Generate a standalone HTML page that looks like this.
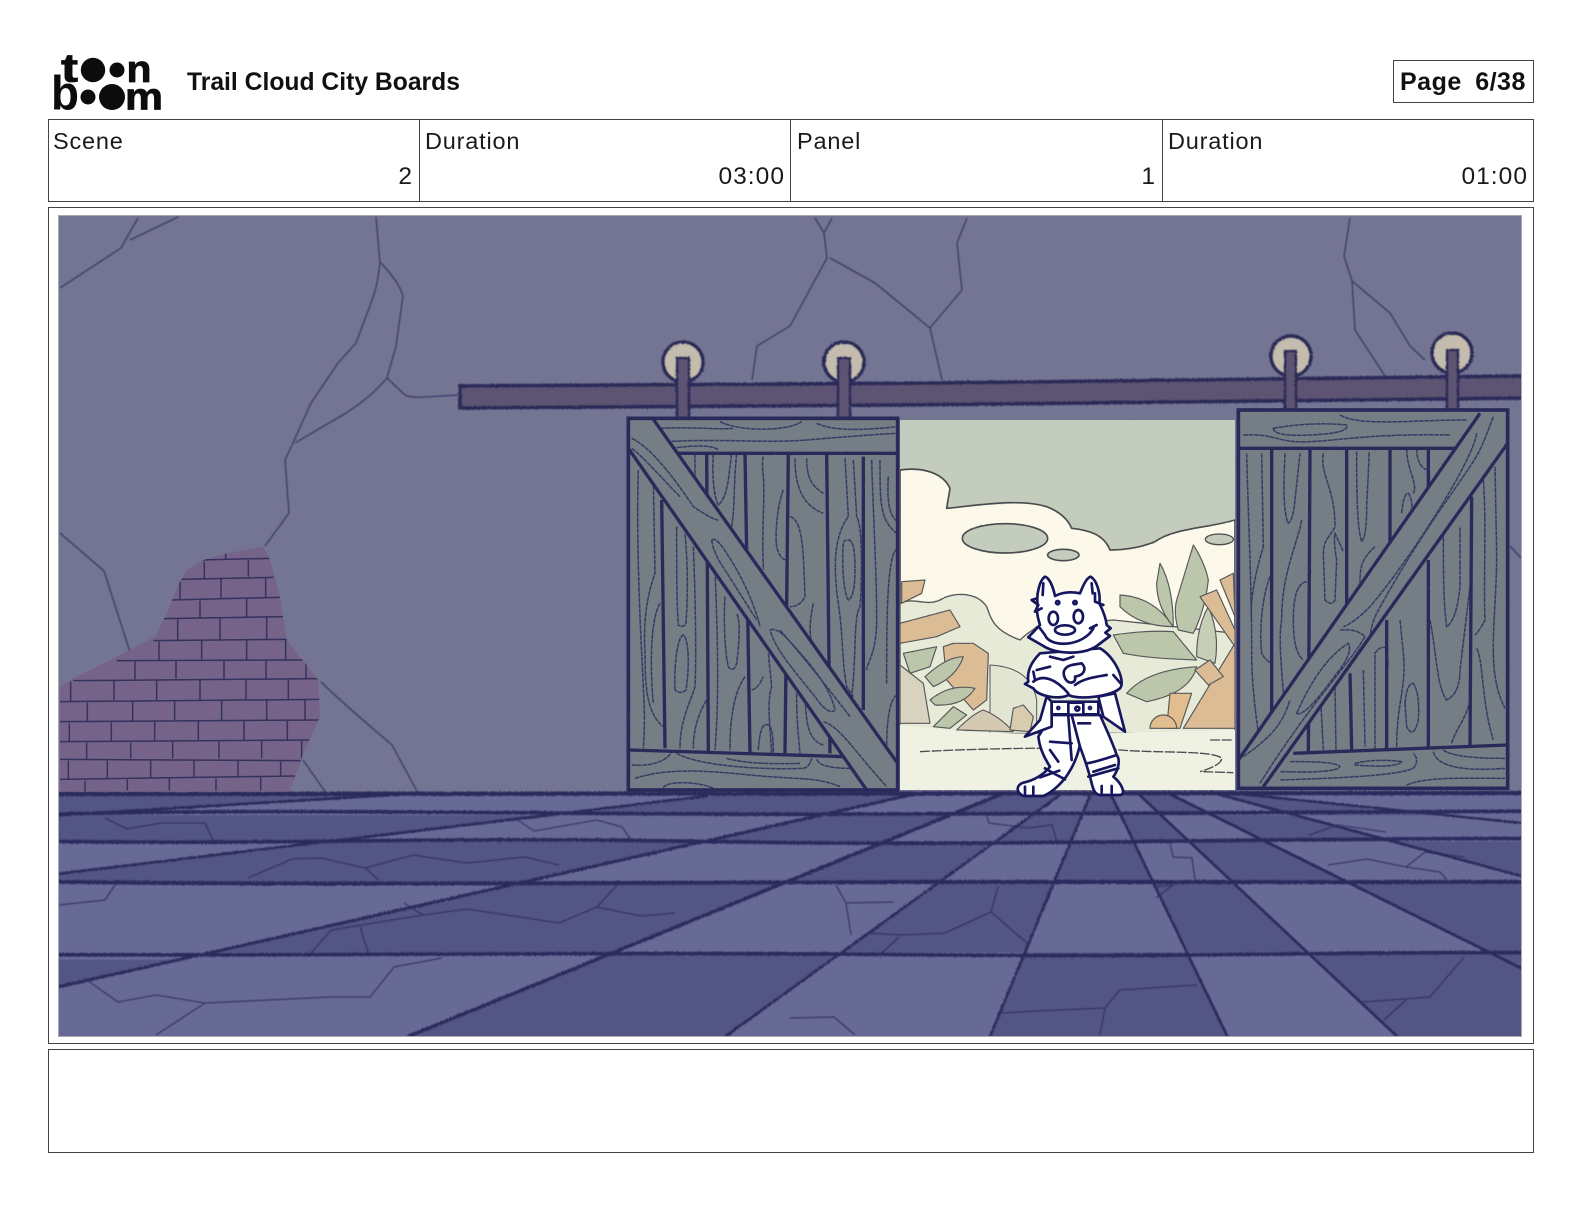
<!DOCTYPE html>
<html>
<head>
<meta charset="utf-8">
<title>Trail Cloud City Boards</title>
<style>
html,body{margin:0;padding:0;background:#fff;}
body{width:1584px;height:1224px;position:relative;overflow:hidden;font-family:"Liberation Sans",sans-serif;color:#111;}
.box{position:absolute;border:1px solid #444;box-sizing:border-box;}
.t{position:absolute;white-space:nowrap;font-size:23.5px;letter-spacing:.8px;line-height:28px;color:#1a1a1a;}
.v{font-size:24.5px;letter-spacing:1.05px;}
.r{text-align:right;}
svg{position:absolute;left:0;top:0;}
</style>
</head>
<body>
<svg width="1584" height="1224" viewBox="0 0 1584 1224" style="z-index:1">
<defs>
<clipPath id="ic"><rect x="58.5" y="215.5" width="1463" height="821"/></clipPath>
<clipPath id="bc"><path d="M670,80 L560,100 L490,120 L440,150 L415,195 L380,280 L345,350 L270,390 L100,475 L60,500 L60,815 L750,815 L790,700 L840,590 L835,480 L780,410 L740,360 L720,230 L690,120 Z"/></clipPath>
<clipPath id="oc"><rect x="60" y="60" width="1005" height="1110"/></clipPath>
<filter id="rough" x="-2%" y="-2%" width="104%" height="104%"><feTurbulence type="fractalNoise" baseFrequency=".55" numOctaves="2" seed="4"/><feDisplacementMap in="SourceGraphic" scale="2.6"/><feGaussianBlur stdDeviation=".5"/></filter>
<filter id="soft"><feGaussianBlur stdDeviation=".45"/></filter>
</defs>

<!-- logo -->
<g fill="#0c0c0c" font-family="Liberation Sans" font-weight="700">
<text x="61" y="81.5" font-size="40" textLength="17" lengthAdjust="spacingAndGlyphs" stroke="#0c0c0c" stroke-width=".8">t</text>
<circle cx="93" cy="70" r="12.2"/><circle cx="117" cy="70" r="7.5"/>
<text x="126.5" y="82" font-size="38" textLength="25" lengthAdjust="spacingAndGlyphs" stroke="#0c0c0c" stroke-width=".8">n</text>
<text x="51" y="109.5" font-size="48" textLength="28" lengthAdjust="spacingAndGlyphs">b</text>
<circle cx="88" cy="97" r="7.5"/><circle cx="112" cy="97" r="13"/>
<text x="125" y="109.5" font-size="38" textLength="38" lengthAdjust="spacingAndGlyphs" stroke="#0c0c0c" stroke-width=".8">m</text>
</g>

<g clip-path="url(#ic)">
<rect x="58" y="215" width="1464" height="585" fill="#747493"/>

<g transform="scale(1.0102)">
<!-- floor -->
<rect x="57" y="785" width="1452" height="245" fill="#686a96"/>
<g fill="#535584" filter="url(#soft)">
<path d="M57,950 L171,950 L57,977Z"/>
<path d="M607,943 L833,943 L718,1026 L404,1026Z"/>
<path d="M1014,943 L1175,943 L1215,1026 L980,1026Z"/>
<path d="M1295,943 L1475,943 L1509,960 L1509,1026 L1383,1026Z"/>
<path d="M210,943 L607,943 L779,873 L520,873Z"/>
<path d="M833,943 L1014,943 L1043,873 L930,873Z"/>
<path d="M1175,943 L1295,943 L1220,873 L1142,873Z"/>
<path d="M1334,873 L1509,873 L1509,960 L1475,943Z"/>
<path d="M57,865 L59,873 L520,873 L697,833 L334,833Z"/>
<path d="M779,873 L930,873 L985,833 L877,833Z"/>
<path d="M1043,873 L1142,873 L1122,833 L1060,833Z"/>
<path d="M1220,873 L1334,873 L1253,833 L1177,833Z"/>
<path d="M1381,833 L1509,833 L1509,868Z"/>
<path d="M57,807 L558,807 L334,833 L57,833Z"/>
<path d="M812,807 L941,807 L877,833 L697,833Z"/>
<path d="M1021,807 L1071,807 L1060,833 L985,833Z"/>
<path d="M1110,807 L1150,807 L1177,833 L1122,833Z"/>
<path d="M1200,807 L1284,807 L1381,833 L1253,833Z"/>
<path d="M57,785 L420,785 L57,807Z"/>
<path d="M730,785 L910,785 L812,807 L558,807Z"/>
<path d="M994,785 L1052,785 L1021,807 L941,807Z"/>
<path d="M1080,785 L1099,785 L1110,807 L1071,807Z"/>
<path d="M1126,785 L1156,785 L1200,807 L1150,807Z"/>
<path d="M1201,785 L1218,785 L1430,807 L1284,807Z"/>
</g>
<g filter="url(#rough)" fill="none" stroke="#2a2b5c" stroke-linecap="round">
<path stroke-width="4.2" d="M57,786 L1509,785"/>
<path stroke-width="3.6" d="M57,806 C300,800 500,806 800,806 S1200,804 1509,803"/>
<path stroke-width="3.6" d="M57,833 C300,836 420,828 700,833 S1200,830 1509,830"/>
<path stroke-width="4" d="M57,873 C300,876 600,874 900,873 S1300,874 1509,873"/>
<path stroke-width="3.6" d="M57,945 C400,946 600,942 900,945 S1300,942 1509,943"/>
<path stroke-width="3.4" d="M404,1026 L994,785"/>
<path stroke-width="2.6" d="M718,1026 L1052,785"/>
<path stroke-width="2.6" d="M980,1026 L1080,785"/>
<path stroke-width="2.6" d="M1215,1026 L1099,785"/>
<path stroke-width="2.6" d="M1383,1026 L1126,785"/>
<path stroke-width="2.8" d="M1509,960 L1156,785"/>
<path stroke-width="2.6" d="M1509,868 L1201,785"/>
<path stroke-width="2.4" d="M1509,815 L1218,785"/>
<path stroke-width="3" d="M57,977 L910,785"/>
<path stroke-width="2.6" d="M57,865 L700,788"/>
<path stroke-width="2.6" d="M57,807 L420,785"/>
</g>
</g>

<!-- wall cracks -->
<g fill="none" stroke="#2a2c5c" stroke-width="1.3" stroke-opacity=".78" filter="url(#soft)" stroke-linejoin="round">
<path d="M60,288 L121,248 L138,218M130,240 L178,217"/>
<path d="M376,217 L380,263 C378,280 376,290 371,303 L356,343 L338,363 L311,403 L293,443 L285,460 L289,513 L265,546"/>
<path d="M381,263 C392,275 400,285 403,296 L396,346 L387,378 C375,392 360,405 341,416 L295,443M387,378 L405,395 Q411,398 425,397 L458,395"/>
<path d="M60,533 L104,571 L130,652"/>
<path d="M321,682 C350,710 375,730 392,745 L418,793M303,760 L326,793"/>
<path d="M815,218 L824,233 L832,218M824,233 L827,258 L790,326 L757,346 L752,380M830,258 L875,283 L930,328 L942,380M930,328 L962,290 L957,243 L967,218"/>
<path d="M1350,218 L1344,256 L1352,281 L1355,330 L1385,376M1352,281 L1390,313 L1410,346 L1425,360M1510,546 L1521,558"/>
</g>

<!-- floor cracks -->
<g fill="none" stroke="#2f3060" stroke-width="1.3" stroke-opacity=".85" filter="url(#soft)">
<path d="M105,818 L127,829 L161,823 L205,823 L214,842"/>
<path d="M515,818 L534,831 L597,820 L622,827 L631,840"/>
<path d="M248,878 L292,859 L321,858 L365,868 L413,855 L467,863 L525,857 L559,865M365,868 L379,880"/>
<path d="M59,905 L105,900 L115,885"/>
<path d="M311,953 L331,930 L423,915 L467,909 L559,923 L597,907 L619,883M597,907 L641,916 L675,913M404,903 L423,915M360,927 L369,955"/>
<path d="M84,978 L118,1002 L156,995 L205,1003 L331,997 L370,997 L394,967 L442,958M205,1003 L156,1035"/>
<path d="M986,813 L989,823 L1028,828 L1052,825 L1057,842"/>
<path d="M1170,843 L1173,857 L1192,858 L1195,880"/>
<path d="M1309,835 L1338,825 L1386,832"/>
<path d="M1328,865 L1367,859 L1406,867 L1440,872 L1447,880M1406,867 L1425,852 L1464,857"/>
<path d="M836,885 L846,903 L894,902M846,903 L851,935"/>
<path d="M868,933 L901,935 L945,933 L991,912 L998,887M991,912 L1027,943M899,937 L882,953"/>
<path d="M1001,1013 L1057,1010 L1105,1008 L1120,990 L1197,985M1105,1008 L1100,1035"/>
<path d="M1464,957 L1430,997 L1362,1002M1406,1000 L1384,1020"/>
<path d="M790,1018 L834,1017 L855,1035"/>
<path d="M1153,887 L1173,885 L1156,898"/>
</g>

<!-- bricks -->
<g transform="translate(40,520) scale(.33333)" filter="url(#soft)">
<path d="M670,80 L560,100 L490,120 L440,150 L415,195 L380,280 L345,350 L270,390 L100,475 L60,500 L60,815 L750,815 L790,700 L840,590 L835,480 L780,410 L740,360 L720,230 L690,120 Z" fill="#74648a"/>
<g clip-path="url(#bc)" stroke="#2f2c58" stroke-width="4.5" fill="none" stroke-opacity=".9">
<path d="M480,120 L690,115M415,178 L700,172M390,240 L720,232M370,296 L735,290M340,362 L745,358M230,422 L790,420M100,482 L835,476M60,545 L845,538M60,605 L840,600M60,665 L820,660M60,718 L790,722M60,778 L765,768"/>
<path d="M493,125 V175M625,120 V170M557,100 V118M420,180 V238M543,175 V235M677,172 V232M480,242 V292M620,236 V290M413,298 V362M540,295 V360M680,292 V358M357,365 V420M485,362 V418M620,360 V420M737,358 V420M285,424 V478M408,422 V476M552,420 V478M678,422 V476M798,430 V476M92,485 V545M222,482 V540M350,482 V540M480,480 V540M618,480 V538M745,478 V538M142,548 V605M278,545 V603M404,543 V600M545,542 V600M680,540 V600M795,540 V600M88,610 V665M214,607 V663M344,605 V662M475,602 V660M612,602 V660M742,602 V660M140,668 V718M272,668 V715M398,665 V715M537,665 V715M665,663 V715M785,663 V715M85,722 V778M202,722 V775M332,722 V772M462,722 V770M594,722 V768M722,725 V768M135,782 V815M262,778 V812M388,775 V812M528,775 V812M662,772 V812"/>
</g>
</g>

<!-- rail -->
<g filter="url(#rough)">
<path d="M460,386 C800,385 1200,381 1523,376 L1523,398 C1200,403 800,406 460,408Z" fill="#5d5272" stroke="#2a2a58" stroke-width="3.6"/>
<circle cx="683" cy="362" r="20" fill="#c4bcae" stroke="#2a2a58" stroke-width="3.6"/>
<circle cx="844" cy="362" r="20" fill="#c4bcae" stroke="#2a2a58" stroke-width="3.6"/>
<circle cx="1291" cy="356" r="20" fill="#c4bcae" stroke="#2a2a58" stroke-width="3.6"/>
<circle cx="1452" cy="353" r="20" fill="#c4bcae" stroke="#2a2a58" stroke-width="3.6"/>
<g fill="#5d5272" stroke="#2a2a58" stroke-width="2.6">
<rect x="677" y="358" width="12" height="62"/>
<rect x="838" y="358" width="12" height="62"/>
<rect x="1285" y="351" width="11" height="60"/>
<rect x="1447" y="350" width="11" height="60"/>
</g>
</g>

<!-- opening -->
<g transform="translate(880,400) scale(.33333)">
<g filter="url(#rough)" clip-path="url(#oc)" stroke-linejoin="round">
<rect x="60" y="60" width="1005" height="1110" fill="#c3ccbd"/>
<path d="M60,210 C130,200 190,220 210,265 L200,325 C300,315 420,295 500,320 C540,335 565,360 575,385 C620,390 670,400 690,450 C740,450 790,440 825,425 C880,385 980,385 1065,360 V1100 H60Z" fill="#fdf9ea" stroke="#4a4e50" stroke-width="5"/>
<ellipse cx="375" cy="415" rx="128" ry="44" fill="#c3ccbd" stroke="#4a4e50" stroke-width="5"/>
<ellipse cx="550" cy="465" rx="47" ry="17" fill="#c3ccbd" stroke="#4a4e50" stroke-width="5"/>
<ellipse cx="1018" cy="418" rx="42" ry="16" fill="#c3ccbd" stroke="#4a4e50" stroke-width="4"/>
<path d="M60,610 C100,590 140,620 180,600 C220,575 290,575 320,620 C335,660 340,690 420,720 C440,700 460,690 470,680 L700,660 L1065,700 V1000 H60Z" fill="#e8ead8" stroke="#55595a" stroke-width="4"/>
<path d="M330,795 C420,800 460,840 470,900 L470,1000 H330Z" fill="#e2e5d2" stroke="#55595a" stroke-width="3"/>
<path d="M60,795 L130,850 L150,970 L60,970Z" fill="#d9d2bf" stroke="#55595a" stroke-width="3.5"/>
<path d="M65,545 L135,540 L125,580 L65,610Z" fill="#dcbc94" stroke="#55595a" stroke-width="3.5"/>
<path d="M60,670 L210,630 L240,680 L170,710 L60,730Z" fill="#dcbc94" stroke="#55595a" stroke-width="3.5"/>
<path d="M70,760 L170,740 L150,800 L90,820Z" fill="#bcc6aa" stroke="#55595a" stroke-width="3.5"/>
<path d="M190,740 L220,730 L280,730 L325,760 L320,900 L280,930 L200,840Z" fill="#dcbc94" stroke="#55595a" stroke-width="3.5"/>
<path d="M135,830 Q200,770 250,770 Q230,830 160,860Z M150,900 Q210,850 285,865 Q250,920 165,915Z M160,980 L220,920 L260,945 L210,985Z" fill="#bcc6aa" stroke="#55595a" stroke-width="3.5"/>
<path d="M230,990 Q280,940 310,930 Q360,950 400,995Z" fill="#d4cab4" stroke="#55595a" stroke-width="3.5"/>
<path d="M390,990 L400,925 L430,915 L460,950 L450,995Z" fill="#d9ccae" stroke="#55595a" stroke-width="3.5"/>
<path d="M720,585 Q820,590 880,680 Q780,680 720,620Z" fill="#bcc6aa" stroke="#55595a" stroke-width="3.5"/>
<path d="M840,490 Q880,560 880,680 Q830,620 830,550Z" fill="#bcc6aa" stroke="#55595a" stroke-width="3.5"/>
<path d="M940,435 Q975,490 985,540 Q975,630 940,700 L895,690 Q880,640 890,600Z" fill="#bcc6aa" stroke="#55595a" stroke-width="3.5"/>
<path d="M985,620 Q1020,700 1005,790 L950,770 Q950,680 985,620Z" fill="#c6cfb5" stroke="#55595a" stroke-width="3.5"/>
<path d="M700,705 Q800,690 880,695 L950,780 Q800,775 730,760Z" fill="#bcc6aa" stroke="#55595a" stroke-width="3.5"/>
<path d="M740,880 Q800,810 950,800 Q930,880 800,905Z" fill="#bcc6aa" stroke="#55595a" stroke-width="3.5"/>
<path d="M910,985 L1065,730 V985Z" fill="#dcbc94" stroke="#55595a" stroke-width="3.5"/>
<path d="M960,590 L1010,570 L1065,690 V740Z M1020,540 L1060,520 L1065,650Z" fill="#dcbc94" stroke="#55595a" stroke-width="3.5"/>
<path d="M945,810 L990,780 L1030,830 L985,855Z" fill="#dcbc94" stroke="#55595a" stroke-width="3.5"/>
<path d="M870,880 L935,880 L900,985 L860,985Z" fill="#e2bd8e" stroke="#55595a" stroke-width="3.5"/>
<path d="M810,985 A40,40 0 0 1 890,985Z" fill="#e2bd8e" stroke="#55595a" stroke-width="3.5"/>
<path d="M60,975 C150,985 250,995 400,1000 S900,995 1065,990 V1170 H60Z" fill="#eff1e2"/>
<path d="M120,1055 C300,1045 600,1040 720,1050 S1000,1050 1025,1075 Q1025,1095 960,1115M990,1020 L1060,1020M970,1115 L1060,1118" fill="none" stroke="#4a4e50" stroke-width="4" stroke-dasharray="30 5"/>
</g>
</g>

<!-- left door -->
<g transform="translate(600,320) scale(.33333)" filter="url(#rough)">
<rect x="85" y="295" width="808" height="1115" fill="#757d85"/>
<g fill="none" stroke="#2c2e5c" stroke-width="4.5" stroke-dasharray="14 2" stroke-opacity=".85">
<path d="M180,325 C300,320 350,330 400,325M360,305 C420,335 560,335 605,305M650,310 C700,335 800,330 890,320M200,365 C350,355 500,370 620,360 S800,345 890,340M215,385 C280,375 340,375 355,390"/>
<path d="M95,1335 C150,1340 200,1325 215,1295M105,1375 C200,1345 300,1350 450,1365 S650,1370 720,1400M190,1405 C195,1380 300,1385 340,1405M230,1300 C300,1340 500,1350 610,1345 Q630,1340 635,1315M650,1318 Q660,1345 750,1345M380,1315 Q450,1335 600,1330"/>
<path d="M115,450 C110,600 115,800 125,1000 S135,1200 130,1285M160,480 L165,760 C140,830 130,900 135,1000 C135,1100 140,1180 190,1220M180,850 C150,900 150,1050 160,1150"/>
<path d="M230,620 C230,750 230,850 235,915 Q250,925 258,910 C265,800 262,720 255,640M225,1110 C222,1050 230,950 250,945 C268,960 268,1050 258,1110 Q240,1125 225,1110M280,680 C285,800 290,1000 285,1100 C270,1150 240,1200 240,1285M320,1140 C295,1180 280,1230 280,1285"/>
<path d="M285,400 L285,490M340,400 C335,480 345,540 355,555 Q375,540 385,480 L395,400M345,740 C350,900 360,1100 345,1290M375,830 C370,900 375,1000 385,1040 Q400,1060 410,1030 C420,950 420,900 410,880M410,400 C400,500 405,560 395,620M435,1070 C400,1120 390,1200 390,1290"/>
<path d="M490,410 Q485,420 490,470 C495,550 485,600 490,750M550,510 C530,560 525,650 530,680 Q540,720 560,720M505,1000 L515,1100 C500,1150 510,1210 515,1300M475,1290 C480,1220 490,1210 505,1215 C520,1220 520,1280 520,1300M455,1110 Q475,1105 490,1070"/>
<path d="M620,415 C620,480 640,500 670,520M585,415 C585,520 620,560 670,580M570,590 C610,600 610,700 615,830 Q600,860 570,860M640,850 C625,920 630,960 640,980M590,1120 C590,1200 595,1250 600,1300M615,1140 C620,1200 620,1260 670,1275"/>
<path d="M735,415 L745,590 C700,650 700,750 715,850 C730,950 725,1020 740,1100 L760,1130M760,420 L770,590 C790,620 785,800 780,860 C760,890 770,1000 755,1130M730,670 C725,720 730,820 745,840 Q765,830 765,750 C765,690 760,660 745,660 Q730,660 730,670"/>
<path d="M815,420 C820,600 830,750 830,900 C830,1000 800,1030 800,1050M840,420 C840,550 840,600 890,640M865,470 C860,550 870,590 893,605M893,685 C860,700 860,900 860,1090M893,1125 C870,1130 860,1200 860,1280"/>
</g>
<g fill="none" stroke="#2a2c5a" stroke-width="10">
<path d="M215,400 H893M90,1290 L740,1310"/>
<path d="M185,540 L195,1285M320,400 L325,1300M435,400 L450,1300M565,400 L555,1300M680,400 L690,1300M790,410 L790,1170"/>
</g>
<path d="M85,295 L160,295 L893,1330 V1410 H800 L85,385Z" fill="#757d85"/>
<path d="M160,298 L893,1330M85,385 L800,1410" fill="none" stroke="#2a2c5a" stroke-width="10"/>
<g fill="none" stroke="#2c2e5c" stroke-width="4.5" stroke-dasharray="14 2" stroke-opacity=".85">
<path d="M95,355 C150,380 220,470 280,560 Q340,600 355,600M95,385 C130,410 190,480 240,530M335,660 Q350,650 380,700 C420,760 460,840 480,920M335,660 Q340,700 375,750 L470,900M510,930 Q530,920 570,965 C630,1030 690,1100 705,1170 Q690,1185 660,1150 C600,1070 530,1000 510,930M670,1205 C720,1220 760,1290 860,1400M540,930 C600,1000 650,1060 750,1190"/>
</g>
<rect x="85" y="295" width="808" height="1115" fill="none" stroke="#2a2c5a" stroke-width="11"/>
</g>

<!-- right door -->
<g transform="translate(1210,320) scale(.33333)" filter="url(#rough)">
<rect x="85" y="270" width="808" height="1135" fill="#757d85"/>
<g fill="none" stroke="#2c2e5c" stroke-width="4.5" stroke-dasharray="14 2" stroke-opacity=".85">
<path d="M190,325 Q300,305 410,315 Q420,340 300,345 Q190,350 190,325ZM100,345 C200,340 200,370 300,365 S500,340 720,345M390,285 C450,320 600,300 770,300"/>
<path d="M240,1325 C300,1325 380,1325 390,1340 Q380,1360 210,1355M435,1330 Q500,1315 575,1325 Q560,1345 435,1335ZM210,1380 C350,1375 550,1370 610,1345 Q630,1320 610,1300M700,1290 Q730,1315 885,1315M670,1295 C680,1340 760,1355 885,1345M590,1395 C650,1370 750,1375 885,1375"/>
<path d="M110,400 C115,600 125,800 125,1000 C125,1100 140,1200 145,1240M155,400 L160,680 C130,780 120,850 125,900M180,770 C150,850 150,950 155,1000 Q165,1020 185,1030"/>
<path d="M225,400 C220,500 220,580 235,610 Q250,600 255,540 L270,400M275,600 C260,680 215,760 215,900 C205,950 215,1050 220,1120M290,785 Q250,790 250,900 C250,950 255,1000 280,1020"/>
<path d="M340,400 C330,470 375,500 375,620 C360,650 340,660 340,700 L345,840 Q365,860 375,840 L380,720 Q370,660 375,640 L400,695"/>
<path d="M330,1100 L340,1290M375,1100 L378,1290"/>
<path d="M440,395 C440,500 440,620 455,665 Q470,650 470,560 L478,395M495,680 C450,720 450,750 450,790"/>
<path d="M460,1050 L465,1280M495,1290 L495,1000 Q510,975 530,985 L535,1040M590,385 C590,450 625,490 610,520M620,385 C620,430 640,450 655,450M575,580 Q580,520 595,520 Q610,540 605,600"/>
<path d="M560,1280 C560,1150 590,1100 580,1000 L570,900M585,1150 Q590,1090 610,1090 Q630,1120 625,1200 Q610,1260 590,1220 Z"/>
<path d="M660,900 C680,1000 680,1100 710,1140 Q750,1120 750,1050 L780,800M700,620 C700,750 700,850 710,920 Q740,900 750,800 L750,620"/>
<path d="M725,1270 C735,1230 780,1180 780,1130M800,985 C820,1020 815,1150 850,1260M820,480 C830,600 820,800 825,900 Q810,930 795,945M855,440 L860,700 C860,900 825,1050 885,1165"/>
</g>
<g fill="none" stroke="#2a2c5a" stroke-width="10">
<path d="M85,385 H740M250,1300 L893,1275"/>
<path d="M185,385 L185,1190M300,385 L295,1300M410,385 L410,860M420,1060 L425,1290M540,385 L540,670M530,900 L530,1290M655,385 L655,500M655,720 L655,1285M785,530 L780,1280"/>
</g>
<path d="M810,275 L893,275 V370 L160,1405 H85 V1320Z" fill="#757d85"/>
<path d="M810,280 L85,1320M893,370 L160,1400" fill="none" stroke="#2a2c5a" stroke-width="10"/>
<g fill="none" stroke="#2c2e5c" stroke-width="4.5" stroke-dasharray="14 2" stroke-opacity=".85">
<path d="M850,290 C830,340 820,380 780,440 C720,530 620,660 500,880 C490,900 485,920 480,945M800,340 C790,420 600,720 480,860 Q430,910 400,920M390,930 Q440,925 465,950 C420,1030 300,1150 150,1390M260,1180 C300,1090 350,1010 415,970 Q430,1000 380,1060 C330,1130 280,1190 260,1180ZM100,1310 C200,1240 220,1200 240,1140"/>
</g>
<rect x="85" y="270" width="808" height="1135" fill="none" stroke="#2a2c5a" stroke-width="11"/>
</g>

<!-- character -->
<g transform="translate(1000,560) scale(.33333)" fill="#fff" stroke="#14195e" stroke-width="8" stroke-linejoin="round" stroke-linecap="round" filter="url(#soft)">
<path d="M155,465 L115,530 C118,560 130,590 150,620 C130,645 105,660 70,668 C50,675 45,695 70,708 L130,708 C160,695 190,665 205,640 C225,610 240,570 245,520 L235,465Z"/>
<path d="M215,465 L240,560 C255,600 268,640 275,670 C280,690 285,703 300,705 L362,705 C378,700 365,670 340,650 C355,630 362,600 350,585 C335,540 315,500 300,465Z"/>
<path d="M135,625 C160,640 180,650 195,658M120,652 L178,632M262,610 C290,605 320,595 350,585M265,650 L355,625M280,635 L345,615M75,680 V702M100,680 V702M305,678 V698M335,678 V698M205,470 L215,600M235,490 L270,490M150,545 L215,550M150,570 L175,605" fill="none"/>
<path d="M140,410 L120,480 L75,530 L155,500 L155,425Z"/>
<path d="M295,410 L310,470 L375,515 L345,400Z"/>
<path d="M120,280 C95,305 80,335 85,365 L75,372 L100,385 C115,410 180,420 205,405 C240,420 330,410 360,385 C378,365 345,290 300,265 L120,280Z"/>
<path d="M100,365 C130,340 170,360 205,400M320,345 C290,350 250,355 225,375M110,330 L150,320M100,335 L105,360M150,290 L190,300 L220,290M340,345 L362,370" fill="none"/>
<path d="M195,355 C185,335 195,320 215,315 L245,310 C260,325 255,345 225,350 C230,370 205,375 195,355Z"/>
<rect x="155" y="425" width="140" height="38"/>
<rect x="205" y="428" width="45" height="36"/>
<circle cx="175" cy="444" r="3"/><circle cx="270" cy="444" r="3"/><circle cx="232" cy="446" r="6"/>
<path d="M113,135 C108,100 120,60 135,50 C150,55 160,85 165,108 C190,95 215,95 240,100 C248,80 258,55 272,50 C290,60 302,100 298,130 C308,150 318,175 320,195 L332,205 L316,218 L330,228 L290,258 C250,285 170,285 125,255 L85,232 L120,195 C112,170 108,150 113,135Z"/>
<path d="M110,115 L95,120 L115,135 L105,155 L125,145M285,100 L285,125 L310,135M130,70 L128,105M275,70 L278,100" fill="none"/>
<ellipse cx="160" cy="175" rx="14" ry="20"/><ellipse cx="235" cy="170" rx="14" ry="20"/>
<circle cx="173" cy="128" r="5"/><circle cx="225" cy="128" r="5"/>
<path d="M135,225 C150,265 250,260 280,205M120,205 L135,225M270,205 L290,195" fill="none"/>
<ellipse cx="195" cy="210" rx="30" ry="14"/>
</g>
</g>

<rect x="58.5" y="215.5" width="1463" height="821" fill="none" stroke="#a9a9b0" stroke-width="1"/>
</svg>

<div class="t" style="left:187px;top:69px;font-size:24.7px;font-weight:700;letter-spacing:0;color:#111;">Trail Cloud City Boards</div>
<div class="box" style="left:1393px;top:60px;width:141px;height:43px;"></div>
<div class="t" style="left:1400px;top:68px;font-size:25px;font-weight:700;letter-spacing:.5px;color:#111;word-spacing:6px;">Page 6/38</div>

<div class="box" style="left:48px;top:119px;width:1486px;height:83px;"></div>
<div style="position:absolute;left:419px;top:119px;width:1px;height:83px;background:#444"></div>
<div style="position:absolute;left:790px;top:119px;width:1px;height:83px;background:#444"></div>
<div style="position:absolute;left:1162px;top:119px;width:1px;height:83px;background:#444"></div>

<div class="t" style="left:53px;top:127px;">Scene</div>
<div class="t v r" style="left:48px;width:365px;top:163px;">2</div>
<div class="t" style="left:425px;top:127px;">Duration</div>
<div class="t v r" style="left:420px;width:365px;top:163px;">03:00</div>
<div class="t" style="left:797px;top:127px;">Panel</div>
<div class="t v r" style="left:792px;width:364px;top:163px;">1</div>
<div class="t" style="left:1168px;top:127px;">Duration</div>
<div class="t v r" style="left:1163px;width:365px;top:163px;">01:00</div>

<div class="box" style="left:48px;top:207px;width:1486px;height:837px;"></div>
<div class="box" style="left:48px;top:1049px;width:1486px;height:104px;"></div>
</body>
</html>
